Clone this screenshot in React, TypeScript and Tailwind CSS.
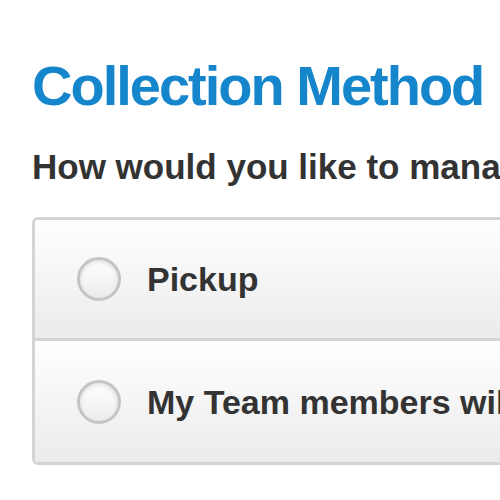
import React from "react";

function Radio() {
  return (
    <span className="block w-[44px] h-[44px] shrink-0 rounded-full border-[3px] border-[#c4c4c4] bg-gradient-to-b from-[#ffffff] to-[#ececec] shadow-[inset_0_2px_4px_rgba(0,0,0,0.12)]" />
  );
}

function Row({ label, last }: { label: string; last?: boolean }) {
  return (
    <div
      className={
        "flex items-center h-[121px] pl-[42px] gap-[26px] bg-gradient-to-b from-[#ffffff] to-[#ebebeb]" +
        (last ? "" : " border-b-[3px] border-[#d4d4d4]")
      }
    >
      <Radio />
      <span className="text-[34px] font-bold text-[#333333] whitespace-nowrap leading-none">{label}</span>
    </div>
  );
}

export default function App() {
  return (
    <div
      className="w-[500px] h-[500px] overflow-hidden bg-white"
      style={{ fontFamily: '"Liberation Sans", Arial, sans-serif' }}
    >
      <div className="pl-[32px] pt-[58px]">
        <h1 className="text-[56px] font-bold text-[#1585cc] leading-none whitespace-nowrap tracking-[-2px]">
          Collection Method
        </h1>
        <p className="mt-[35px] text-[35px] font-bold text-[#333333] leading-none whitespace-nowrap">
          How would you like to manage collection?
        </p>
        <div className="mt-[33px] w-[700px] rounded-[6px] border-[3px] border-[#d4d4d4] overflow-hidden">
          <Row label="Pickup" />
          <Row label="My Team members will collect" last />
        </div>
      </div>
    </div>
  );
}
